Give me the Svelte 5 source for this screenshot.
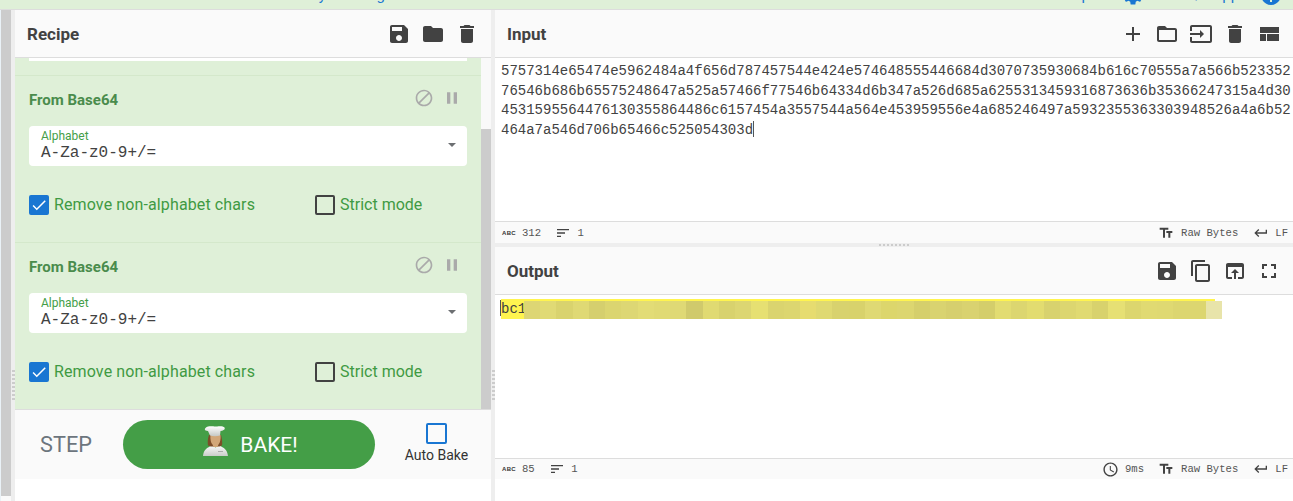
<script lang="ts">
  const icons: Record<string, string> = {
    save: 'M17 3H5c-1.11 0-2 .9-2 2v14c0 1.1.89 2 2 2h14c1.1 0 2-.9 2-2V7l-4-4zm-5 16c-1.66 0-3-1.34-3-3s1.34-3 3-3 3 1.34 3 3-1.34 3-3 3zm3-10H5V5h10v4z',
    folder: 'M10 4H4c-1.1 0-1.99.9-1.99 2L2 18c0 1.1.9 2 2 2h16c1.1 0 2-.9 2-2V8c0-1.1-.9-2-2-2h-8l-2-2z',
    trash: 'M6 19c0 1.1.9 2 2 2h8c1.1 0 2-.9 2-2V7H6v12zM19 4h-3.5l-1-1h-5l-1 1H5v2h14V4z',
    add: 'M19 13h-6v6h-2v-6H5v-2h6V5h2v6h6v2z',
    open: 'M20 6h-8l-2-2H4c-1.1 0-1.99.9-1.99 2L2 18c0 1.1.9 2 2 2h16c1.1 0 2-.9 2-2V8c0-1.1-.9-2-2-2zm0 12H4V8h16v10z',
    input: 'M21 3.01H3c-1.1 0-2 .9-2 2V9h2V4.99h18v14.03H3V15H1v4.01c0 1.1.9 1.98 2 1.98h18c1.1 0 2-.88 2-1.98v-14c0-1.11-.9-2-2-2zM11 16l4-4-4-4v3H1v2h10v3z',
    layout: 'M3 19h6v-7H3v7zm7 0h12v-7H10v7zM3 5v6h19V5H3z',
    copy: 'M16 1H4c-1.1 0-2 .9-2 2v14h2V3h12V1zm3 4H8c-1.1 0-2 .9-2 2v14c0 1.1.9 2 2 2h11c1.1 0 2-.9 2-2V7c0-1.1-.9-2-2-2zm0 16H8V7h11v14z',
    browser: 'M19 4H5c-1.11 0-2 .9-2 2v12c0 1.1.89 2 2 2h4v-2H5V8h14v10h-4v2h4c1.1 0 2-.9 2-2V6c0-1.1-.89-2-2-2zm-7 6l-4 4h3v6h2v-6h3l-4-4z',
    fullscreen: 'M7 14H5v5h5v-2H7v-3zm-2-4h2V7h3V5H5v5zm12 7h-3v2h5v-5h-2v3zM14 5v2h3v3h2V5h-5z',
    block: 'M12 2C6.48 2 2 6.48 2 12s4.48 10 10 10 10-4.48 10-10S17.52 2 12 2zM4 12c0-4.42 3.58-8 8-8 1.85 0 3.55.63 4.9 1.69L5.69 16.9C4.63 15.55 4 13.85 4 12zm8 8c-1.85 0-3.55-.63-4.9-1.69L18.31 7.1C19.37 8.45 20 10.15 20 12c0 4.42-3.58 8-8 8z',
    pause: 'M6 19h4V5H6v14zm8-14v14h4V5h-4z',
    check: 'M9 16.17L4.83 12l-1.42 1.41L9 19 21 7l-1.41-1.41z',
    textFields: 'M2.5 4v3h5v12h3V7h5V4h-13zm19 5h-9v3h3v7h3v-7h3V9z',
    enter: 'M19 7v4H5.83l3.58-3.59L8 6l-6 6 6 6 1.41-1.41L5.83 13H21V7z',
    sort: 'M3 18h6v-2H3v2zM3 6v2h18V6H3zm0 7h12v-2H3v2z',
    clock: 'M11.99 2C6.47 2 2 6.48 2 12s4.47 10 9.99 10C17.52 22 22 17.52 22 12S17.52 2 11.99 2zM12 20c-4.42 0-8-3.58-8-8s3.58-8 8-8 8 3.58 8 8-3.58 8-8 8zm.5-13H11v6l5.25 3.15.75-1.23-4.5-2.67z',
    gear: 'M19.14 12.94c.04-.3.06-.61.06-.94s-.02-.64-.07-.94l2.03-1.58a.49.49 0 0 0 .12-.61l-1.92-3.32a.49.49 0 0 0-.59-.22l-2.39.96c-.5-.38-1.03-.7-1.62-.94l-.36-2.54a.48.48 0 0 0-.48-.41h-3.84a.48.48 0 0 0-.47.41l-.36 2.54c-.59.24-1.13.57-1.62.94l-2.39-.96a.49.49 0 0 0-.59.22L2.74 8.87a.48.48 0 0 0 .12.61l2.03 1.58c-.05.3-.09.63-.09.94s.02.64.07.94l-2.03 1.58a.49.49 0 0 0-.12.61l1.92 3.32c.12.22.37.29.59.22l2.39-.96c.5.38 1.03.7 1.62.94l.36 2.54c.05.24.24.41.48.41h3.84c.24 0 .44-.17.47-.41l.36-2.54c.59-.24 1.13-.56 1.62-.94l2.39.96c.22.08.47 0 .59-.22l1.92-3.32a.48.48 0 0 0-.12-.61l-2.01-1.58z',
    help: 'M12 2C6.48 2 2 6.48 2 12s4.48 10 10 10 10-4.48 10-10S17.52 2 12 2zm1 17h-2v-2h2v2z'
  };

  const inputText =
    '5757314e65474e5962484a4f656d787457544e424e574648555446684d3070735930684b616c70555a7a566b523352' +
    '76546b686b65575248647a525a57466f77546b64334d6b347a526d685a6255313459316873636b35366247315a4d30' +
    '4531595564476130355864486c6157454a3557544a564e453959556e4a685246497a5932355363303948526a4a6b52' +
    '464a7a546d706b65466c525054303d';

  // pixelated cover over the redacted part of the output
  const mosaic = [
    '#ddd674', '#e0da75', '#d9d36e', '#dfd974', '#d5cf6e', '#dbd570', '#ddd774', '#e2dc76',
    '#e0da74', '#dfd975', '#d0ca6c', '#e0da72', '#d8d26e', '#dcd672', '#e6e072', '#dad46f',
    '#dcd670', '#e6dc70', '#dfd972', '#d8d26e', '#d8d26c', '#dfd974', '#dcd66c', '#dcd670',
    '#d5cf6c', '#d9d370', '#d6cf6e', '#d9d270', '#d4ce6b', '#e2dc72', '#dcd670', '#e2dc70',
    '#d8d26e', '#dcd670', '#e0da72', '#d8d26d', '#e6e074', '#dcd66e', '#e0da72', '#dfd972',
    '#dcd670', '#dcd670', '#e8e4aa'
  ];

  const recipeIcons = ['save', 'folder', 'trash'];
  const inputIcons = ['add', 'open', 'input', 'trash', 'layout'];
  const outputIcons = ['save', 'copy', 'browser', 'fullscreen'];
</script>

{#snippet icon(name: string, size = 24)}
  <svg class="icon" width={size} height={size} viewBox="0 0 24 24" fill="currentColor"><path d={icons[name]} /></svg>
{/snippet}

{#snippet operation()}
  <div class="op">
    <div class="op-head">
      <span class="op-title">From Base64</span>
      <span class="op-actions">
        {@render icon('block', 20)}
        {@render icon('pause', 20)}
      </span>
    </div>
    <div class="select">
      <span class="select-label">Alphabet</span>
      <span class="select-value">A-Za-z0-9+/=</span>
      <span class="caret"></span>
    </div>
    <div class="checks">
      <span class="check">
        <span class="box on">{@render icon('check', 18)}</span>
        <span class="check-text wide">Remove non-alphabet chars</span>
      </span>
      <span class="check">
        <span class="box"></span>
        <span class="check-text">Strict mode</span>
      </span>
    </div>
  </div>
{/snippet}

<div class="app">
  <div class="banner">
    <span class="banner-mid">Last build: Friday morning</span>
    <span class="banner-opt">Options</span>
    <span class="banner-gear">{@render icon('gear', 24)}</span>
    <span class="banner-about">About / Support</span>
    <span class="banner-help">{@render icon('help', 24)}</span>
  </div>

  <div class="main">
    <div class="ops-strip"><div class="ops-bar"></div></div>
    <div class="gutter"><span class="dots"></span></div>

    <section class="recipe">
      <header class="pane-head">
        <h2>Recipe</h2>
        <div class="tools">
          {#each recipeIcons as name}{@render icon(name)}{/each}
        </div>
      </header>
      <div class="recipe-body">
        <div class="op-list">
          <div class="op-stub"><div class="stub-input"></div></div>
          {@render operation()}
          {@render operation()}
        </div>
        <div class="scroll"><div class="thumb"></div></div>
      </div>
      <div class="bake">
        <button class="step">STEP</button>
        <button class="bake-btn">
          <svg class="chef" width="25" height="30" viewBox="0 0 25 30">
            <defs>
              <linearGradient id="coat" x1="0" y1="0" x2="0" y2="1">
                <stop offset="0" stop-color="#fbfbfb" />
                <stop offset="1" stop-color="#c9cdc9" />
              </linearGradient>
              <linearGradient id="hat" x1="0" y1="0" x2="0" y2="1">
                <stop offset="0" stop-color="#fff" />
                <stop offset="1" stop-color="#c4c8c4" />
              </linearGradient>
            </defs>
            <path d="M0 30C.6 24 4 21.5 9 19.5l3.5 2 3.5-2c5 2 8.400 4.500 9 10.500z" fill="url(#coat)" />
            <path d="M6 9c-1.500 4-1.500 8-1 10.500 2 1 4 1 4.500 1h6c1 0 2.500-.5 3.500-1 .5-3 0-7-1-10.500z" fill="#7c4d28" />
            <path d="M7.500 9c-.5 4 .5 8 2 9.500l1 2.500h4l1-2.500c1.500-1.500 2.500-5.500 2-9.500z" fill="#d2a778" />
            <path d="M5 5C2 5 1 3.500 2.500 2 5-.5 10 .5 12 .5S20-.5 21.500 1.500c1 2-1 3-4 3.500l-.5 4.500c-3 1-7 1-10 0z" fill="url(#hat)" />
            <rect x="15" y="25" width="5" height="1" fill="#aaa" />
          </svg>
          BAKE!
        </button>
        <div class="auto">
          <span class="auto-box"></span>
          <span>Auto Bake</span>
        </div>
      </div>
    </section>

    <div class="gutter"><span class="dots"></span></div>

    <div class="io">
      <section class="pane">
        <header class="pane-head">
          <h2>Input</h2>
          <div class="tools">
            {#each inputIcons as name}{@render icon(name)}{/each}
          </div>
        </header>
        <div class="text input-text">{inputText}<span class="cursor"></span></div>
        <footer class="status">
          <div class="status-side">
            <span class="abc">ABC</span><span class="num">312</span>
            <span class="sort">{@render icon('sort', 16)}</span><span class="num">1</span>
          </div>
          <div class="status-side">
            <span class="ico">{@render icon('textFields', 16)}</span><span class="stat">Raw Bytes</span>
            <span class="ico ret">{@render icon('enter', 16)}</span><span class="stat">LF</span>
          </div>
        </footer>
      </section>

      <div class="hgutter"><span class="hdots"></span></div>

      <section class="pane out">
        <header class="pane-head">
          <h2>Output</h2>
          <div class="tools">
            {#each outputIcons as name}{@render icon(name)}{/each}
          </div>
        </header>
        <div class="text output-text">
          <div class="hl">
            <span class="cursor out-cursor"></span>bc1
            <div class="mosaic">
              {#each mosaic as color}
                <span style="background: {color}"></span>
              {/each}
            </div>
          </div>
        </div>
        <footer class="status">
          <div class="status-side">
            <span class="abc">ABC</span><span class="num">85</span>
            <span class="sort">{@render icon('sort', 16)}</span><span class="num">1</span>
          </div>
          <div class="status-side">
            <span class="ico clock">{@render icon('clock', 17)}</span><span class="stat time">9ms</span>
            <span class="ico">{@render icon('textFields', 16)}</span><span class="stat">Raw Bytes</span>
            <span class="ico ret">{@render icon('enter', 16)}</span><span class="stat">LF</span>
          </div>
        </footer>
      </section>
    </div>
  </div>
</div>

<style>
  :global(body) { margin: 0; background: #fff; overflow: hidden; }
  .app { width: 1293px; height: 501px; overflow: hidden; font-family: Roboto, "Liberation Sans", sans-serif; color: #424242; }
  .icon { display: block; flex: none; }

  .banner {
    position: relative; height: 9px; overflow: hidden; background: #dff0d8;
    border-bottom: 1px solid #ddd; color: #1976d2; font-size: 15px; display: flex;
  }
  .banner span { position: absolute; bottom: 4px; line-height: 20px; white-space: nowrap; }
  .banner-mid { right: 908px; }
  .banner-opt { right: 170px; }
  .banner-gear { left: 1121px; bottom: 2px !important; }
  .banner-about { right: 35px; }
  .banner-help { left: 1259px; bottom: 2px !important; }

  .main { display: flex; height: 491px; }
  .ops-strip { width: 11px; box-sizing: border-box; border-left: 1px solid #eaf2f7; background: #fafafa; }
  .ops-bar { height: 486px; background: #ccc; }
  .gutter { width: 4px; background: #eee; display: flex; justify-content: center; }
  .dots {
    width: 3px; height: 30px; margin-top: 360px;
    background: repeating-linear-gradient(to bottom, #ccc 0 2px, transparent 2px 4px);
  }

  .recipe { width: 476px; display: flex; flex-direction: column; }
  .pane-head {
    height: 47px; flex: none; background: #fafafa; border-bottom: 1px solid #ddd;
    display: flex; align-items: center; justify-content: space-between; padding: 0 12px;
  }
  h2 { margin: 0; font-size: 17px; font-weight: 700; color: #424242; }
  .tools { display: flex; gap: 10px; }

  .recipe-body { display: flex; height: 351px; flex: none; }
  .op-list { flex: 1; overflow: hidden; }
  .scroll { width: 10px; background: #f9f9f9; }
  .thumb { height: 280px; margin-top: 71px; background: #ccc; }

  .op-stub { height: 17px; padding: 0 14px; background: #dff0d8; border-bottom: 1px solid #d4e8cb; }
  .stub-input { height: 3px; background: #fff; }
  .op {
    height: 166px; box-sizing: content-box; padding: 0 14px; background: #dff0d8;
    border-bottom: 1px solid #d4e8cb; color: #3f9a43;
  }
  .op-head { display: flex; align-items: center; justify-content: space-between; height: 20px; padding-top: 14px; }
  .op-title { font-size: 15px; font-weight: 700; color: #4a8c4c; }
  .op-actions { display: flex; gap: 8px; color: #aaa; margin-right: 5px; margin-top: -4px; }
  .select {
    position: relative; height: 40px; margin-top: 16px; background: #fff; border-radius: 4px;
    padding: 0 12px; display: flex; flex-direction: column;
  }
  .select-label { font-size: 12px; line-height: 14px; margin-top: 3px; color: #449e48; }
  .select-value { font-family: "Liberation Mono", monospace; font-size: 16px; line-height: 16px; margin-top: 2px; color: #424242; }
  .caret {
    position: absolute; right: 11px; top: 17px; width: 0; height: 0;
    border: 4.5px solid transparent; border-top-color: #6c6f72; border-bottom: 0;
  }
  .checks { display: grid; grid-template-columns: 286px 1fr; margin-top: 29px; }
  .check { display: flex; align-items: center; gap: 5px; font-size: 16px; height: 20px; color: #3f9a43; white-space: nowrap; }
  .check-text { margin-bottom: 2px; }
  .wide { letter-spacing: .12px; }
  .box {
    width: 20px; height: 20px; box-sizing: border-box; border: 2px solid #424242; border-radius: 2px;
    display: flex; align-items: center; justify-content: center; flex: none;
  }
  .box.on { background: #1976d2; border-color: #1976d2; color: #fff; }

  .bake {
    height: 69px; flex: none; border-top: 1px solid #ddd; background: #fafafa;
    display: flex; align-items: center; box-sizing: content-box;
  }
  .step {
    width: 108px; height: 49px; border: 0; background: none; padding: 0 6px 0 0;
    font: 21.7px Roboto, sans-serif; color: #6c757d;
  }
  .bake-btn {
    width: 252px; height: 49px; border: 0; border-radius: 25px; background: #449e47; color: #fff;
    font: 21px Roboto, sans-serif; display: flex; align-items: center; justify-content: center; gap: 12px;
    padding: 0 0 0 3px;
  }
  .chef { margin-top: -8px; }
  .auto {
    flex: 1; display: flex; flex-direction: column; align-items: center; font-size: 14px; color: #333;
    gap: 3px; margin-top: -4px; padding-left: 7px;
  }
  .auto-box { width: 21px; height: 21px; box-sizing: border-box; border: 2px solid #1976d2; border-radius: 2px; }

  .io { flex: 1; display: flex; flex-direction: column; min-width: 0; }
  .pane { display: flex; flex-direction: column; height: 233px; }
  .pane.out { height: 232px; }
  .text {
    flex: 1; min-height: 0; box-sizing: border-box; font-family: "Liberation Mono", monospace;
    font-size: 14px; line-height: 19.5px; color: #424242;
  }
  .input-text { padding: 4px 0 0 6px; word-break: break-all; }
  .output-text { padding: 4px 0 0 6px; }
  .cursor { display: inline-block; width: 1px; height: 16px; background: #555; vertical-align: -3px; }
  .status {
    flex: none; height: 20px; border-top: 1px solid #ddd; background: #fafafa;
    display: flex; justify-content: space-between; align-items: center;
    font-family: "Liberation Mono", monospace; font-size: 10.6px; color: #555; padding: 0 5px 0 7px;
  }
  .pane:not(.out) .status { height: 21px; }
  .status-side { display: flex; align-items: center; }
  .abc { font: 700 6px "Liberation Sans", sans-serif; color: #333; width: 13px; letter-spacing: .3px; margin-right: 7px; }
  .sort { margin: 0 6.5px 0 14px; color: #424242; }
  .num { color: #555; }
  .ico { color: #424242; margin-right: 7px; }
  .ico.clock { margin-right: 6px; }
  .ico.ret { margin: 0 6px 0 15px; }
  .time { margin-right: 14px; }

  .hgutter { height: 4px; flex: none; background: #eee; display: flex; justify-content: center; }
  .hdots {
    width: 30px; height: 2px; margin-top: 1px;
    background: repeating-linear-gradient(to right, #ccc 0 2px, transparent 2px 4px);
  }

  .hl { position: relative; width: 714px; height: 20px; line-height: 20px; background: #fff44f; white-space: nowrap; }
  .out-cursor { position: absolute; left: -1px; top: 1px; }
  .mosaic { position: absolute; left: 23px; top: 2px; height: 18px; width: 698px; display: flex; }
  .mosaic span { flex: 1; }
</style>
